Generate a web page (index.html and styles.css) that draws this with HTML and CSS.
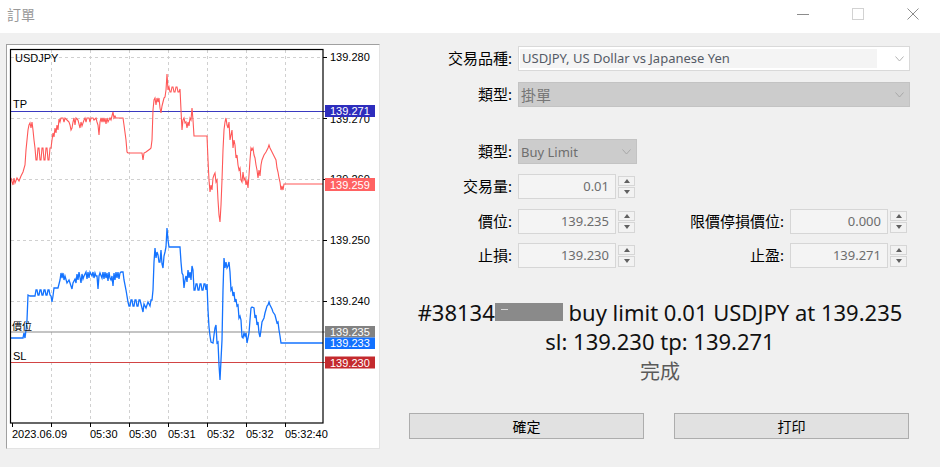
FILE: index.html
```html
<!DOCTYPE html>
<html lang="zh-Hant">
<head>
    <meta charset="UTF-8">
    <meta name="viewport" content="width=device-width, initial-scale=1.0">
    <title>訂單</title>
    <link rel="stylesheet" href="styles.css">
</head>
<body>
    <div class="titlebar">
        <div class="title">訂單</div>
        <div class="controls">
            <svg width="12" height="12"><line x1="0" y1="6.5" x2="12" y2="6.5" stroke="#8c8c8c"/></svg>
            <svg width="12" height="12"><rect x="0.5" y="0.5" width="11" height="11" fill="none" stroke="#d2d2d2"/></svg>
            <svg width="12" height="12"><path d="M0.5 0.5 L11.5 11.5 M11.5 0.5 L0.5 11.5" stroke="#8c8c8c"/></svg>
        </div>
    </div>

    <div class="main">
        <!-- chart -->
        <div class="chart-panel">
            <svg class="chart" width="372" height="403" viewBox="7 45 372 403">
                <g class="grid">
                    <line x1="11" y1="57.5" x2="323" y2="57.5"/>
                    <line x1="11" y1="118.5" x2="323" y2="118.5"/>
                    <line x1="11" y1="179.5" x2="323" y2="179.5"/>
                    <line x1="11" y1="240.5" x2="323" y2="240.5"/>
                    <line x1="11" y1="301.5" x2="323" y2="301.5"/>
                    <line x1="51.5" y1="50" x2="51.5" y2="423"/>
                    <line x1="90.5" y1="50" x2="90.5" y2="423"/>
                    <line x1="129.5" y1="50" x2="129.5" y2="423"/>
                    <line x1="168.5" y1="50" x2="168.5" y2="423"/>
                    <line x1="207.5" y1="50" x2="207.5" y2="423"/>
                    <line x1="246.5" y1="50" x2="246.5" y2="423"/>
                    <line x1="285.5" y1="50" x2="285.5" y2="423"/>
                </g>

                <g class="ticks">
                    <line x1="323" y1="57.5" x2="327" y2="57.5"/>
                    <line x1="323" y1="118.5" x2="327" y2="118.5"/>
                    <line x1="323" y1="179.5" x2="327" y2="179.5"/>
                    <line x1="323" y1="240.5" x2="327" y2="240.5"/>
                    <line x1="323" y1="301.5" x2="327" y2="301.5"/>
                    <line x1="12.5" y1="423" x2="12.5" y2="427"/>
                    <line x1="51.5" y1="423" x2="51.5" y2="427"/>
                    <line x1="90.5" y1="423" x2="90.5" y2="427"/>
                    <line x1="129.5" y1="423" x2="129.5" y2="427"/>
                    <line x1="168.5" y1="423" x2="168.5" y2="427"/>
                    <line x1="207.5" y1="423" x2="207.5" y2="427"/>
                    <line x1="246.5" y1="423" x2="246.5" y2="427"/>
                    <line x1="285.5" y1="423" x2="285.5" y2="427"/>
                </g>

                <g class="axis-text">
                    <text x="330" y="61">139.280</text>
                    <text x="330" y="123">139.270</text>
                    <text x="330" y="183">139.260</text>
                    <text x="330" y="244">139.250</text>
                    <text x="330" y="305">139.240</text>
                    <text x="12" y="438">2023.06.09</text>
                    <text x="90" y="438">05:30</text>
                    <text x="129" y="438">05:30</text>
                    <text x="168" y="438">05:31</text>
                    <text x="207" y="438">05:32</text>
                    <text x="246" y="438">05:32</text>
                    <text x="285" y="438">05:32:40</text>
                </g>

                <line class="lvl-tp" x1="11" y1="111.5" x2="325" y2="111.5"/>
                <line class="lvl-open" x1="11" y1="332" x2="325" y2="332"/>
                <line class="lvl-sl" x1="11" y1="362.5" x2="325" y2="362.5"/>

                <!-- ask -->
                <polyline class="ask" points="11,178 13,185 14,178 15,183 17,178 19,181 21,176 23,172 25,165 26,150 28,130 29,125 30,123 31,128 32,122 33,130 34,140 35,148 36,160 37,160 38,148 39,148 40,160 41,160 42,148 43,148 44,160 45,160 46,148 47,148 48,160 49,160 50,148 51,148 52,140 53,133 54,137 55,128 56,133 57,125 58,130 59,119 60,122 61,118 63,118 64,122 65,118 67,120 69,122 70,125 71,130 72,128 73,122 74,118 75,125 76,118 78,120 79,124 80,128 81,122 82,126 84,120 85,118 86,122 87,118 89,118 90,122 91,118 93,118 94,120 96,118 97,122 98,125 99,135 100,122 101,118 102,122 103,118 104,122 105,118 106,124 107,118 108,122 110,118 111,120 112,116 113,112 114,118 115,116 116,118 123,118 124,125 126,140 127,152 128,153 142,153 143,160 144,153 146,152 150,149 151,148 152,140 153,110 154,100 155,98 156,105 157,98 158,102 159,98 160,108 161,113 162,106 163,102 164,98 165,97 166,90 167,74 168,90 169,87 170,92 171,92 172,87 173,87 174,92 175,92 176,87 177,87 178,92 179,92 180,89 181,110 182,130 183,120 184,118 185,123 186,122 187,128 188,122 189,126 190,118 191,120 192,108 193,120 194,136 207,136 208,160 209,180 210,192 211,185 212,190 213,178 214,175 215,173 216,182 217,180 218,200 219,215 220,222 221,205 222,180 223,150 224,130 225,122 226,118 227,125 228,128 229,122 230,140 231,135 232,130 233,148 234,140 235,145 236,158 237,155 238,165 239,170 240,168 241,180 242,182 243,172 244,180 245,178 246,185 247,180 248,188 249,175 250,160 251,148 252,150 253,148 254,155 255,158 256,165 257,170 258,178 259,170 260,176 261,165 262,160 264,155 266,152 268,148 269,145 270,148 272,152 274,156 276,160 277,168 278,172 279,178 280,182 281,190 282,186 283,190 284,184 323,184"/>
                <!-- bid -->
                <polyline class="bid" points="11,338 23,338 24,333 25,338 26,330 27,320 28,295 30,296 35,296 36,290 37,290 38,295 39,295 40,290 41,290 42,295 43,295 44,290 45,290 46,295 47,295 48,290 49,290 50,295 51,296 52,302 53,296 54,288 58,288 60,280 61,273 62,278 63,273 64,280 65,276 67,283 69,280 71,286 72,289 73,283 75,279 76,283 77,274 78,280 79,272 81,283 82,274 83,279 84,276 86,272 87,279 88,272 89,278 90,272 92,276 93,272 94,278 95,273 96,276 97,276 98,289 99,276 100,273 102,278 103,272 104,279 105,272 106,278 107,273 108,281 109,272 110,278 111,280 112,276 113,286 114,273 115,280 116,272 117,278 118,272 119,279 120,273 121,272 123,272 124,280 126,290 128,302 129,306 130,306 131,300 132,300 133,306 134,306 135,300 136,300 137,306 138,306 139,300 140,300 142,308 143,312 144,304 146,308 148,302 150,306 151,300 152,300 153,290 154,262 155,248 156,258 157,252 158,255 159,262 160,262 161,250 162,264 163,268 164,256 165,252 166,247 167,228 168,240 169,247 180,247 181,262 182,273 183,275 184,288 185,280 186,276 187,282 188,270 189,278 190,272 191,280 192,266 193,270 194,290 195,290 196,284 197,284 198,290 199,290 200,284 201,284 202,290 203,290 204,284 205,284 206,290 207,284 208,310 209,327 210,336 211,342 213,343 214,335 215,328 216,325 217,343 218,342 219,365 220,380 221,360 222,340 223,290 224,258 225,268 226,262 227,268 228,266 229,262 230,272 231,290 232,288 233,296 234,292 235,302 236,299 237,306 238,305 239,318 240,316 241,320 242,337 243,338 244,333 245,336 246,333 247,343 248,338 249,333 250,320 251,308 252,307 254,308 255,318 256,315 257,325 258,322 259,333 260,337 261,330 262,322 264,318 265,313 267,306 268,305 269,302 270,305 272,309 273,312 275,315 276,319 277,323 278,322 279,330 280,336 281,343 282,343 323,343"/>

                <rect class="frame" x="10.5" y="49.5" width="312.5" height="373.5"/>

                <g class="chart-labels">
                    <text x="15" y="62">USDJPY</text>
                    <text x="13" y="108">TP</text>
                    <text x="12" y="330" class="cjk">價位</text>
                    <text x="13" y="360">SL</text>
                </g>

                <g class="tags">
                    <rect x="325" y="105" width="50" height="12" fill="#2d2dbd"/>
                    <text x="330" y="115">139.271</text>
                    <rect x="325" y="178" width="50" height="13" fill="#ff6262"/>
                    <text x="330" y="188.5">139.259</text>
                    <rect x="325" y="326" width="50" height="11.5" fill="#828282"/>
                    <text x="330" y="335.5">139.235</text>
                    <rect x="325" y="337.5" width="50" height="11.5" fill="#1271ff"/>
                    <text x="330" y="347">139.233</text>
                    <rect x="325" y="356.5" width="50" height="12" fill="#c42a2e"/>
                    <text x="330" y="366.5">139.230</text>
                </g>
            </svg>
        </div>

        <!-- order form -->
        <div class="form">
            <div class="row r1">
                <div class="lbl">交易品種:</div>
                <div class="select select-white wide">
                    <span class="select-text">USDJPY, US Dollar vs Japanese Yen</span>
                    <svg class="chev" width="9" height="6"><polyline points="0.5,0.5 4.5,5 8.5,0.5" fill="none" stroke="#b4b4b4"/></svg>
                </div>
            </div>
            <div class="row r2">
                <div class="lbl">類型:</div>
                <div class="select select-grey wide">
                    <span class="select-text cjk-val">掛單</span>
                    <svg class="chev" width="9" height="6"><polyline points="0.5,0.5 4.5,5 8.5,0.5" fill="none" stroke="#a8a8a8"/></svg>
                </div>
            </div>
            <div class="row r3">
                <div class="lbl">類型:</div>
                <div class="select select-grey narrow">
                    <span class="select-text">Buy Limit</span>
                    <svg class="chev" width="9" height="6"><polyline points="0.5,0.5 4.5,5 8.5,0.5" fill="none" stroke="#a8a8a8"/></svg>
                </div>
            </div>
            <div class="row r4">
                <div class="lbl">交易量:</div>
                <div class="num">0.01</div>
                <div class="spin"><span class="up"></span><span class="down"></span></div>
            </div>
            <div class="row r5">
                <div class="lbl">價位:</div>
                <div class="num">139.235</div>
                <div class="spin"><span class="up"></span><span class="down"></span></div>
                <div class="lbl lbl-right">限價停損價位:</div>
                <div class="num">0.000</div>
                <div class="spin"><span class="up"></span><span class="down"></span></div>
            </div>
            <div class="row r6">
                <div class="lbl">止損:</div>
                <div class="num">139.230</div>
                <div class="spin"><span class="up"></span><span class="down"></span></div>
                <div class="lbl lbl-right">止盈:</div>
                <div class="num">139.271</div>
                <div class="spin"><span class="up"></span><span class="down"></span></div>
            </div>

            <div class="message">
                <div>#38134<span class="redacted"></span> buy limit 0.01 USDJPY at 139.235</div>
                <div>sl: 139.230 tp: 139.271</div>
                <div class="done">完成</div>
            </div>

            <div class="buttons">
                <div class="btn">確定</div>
                <div class="btn">打印</div>
            </div>
        </div>
    </div>
</body>
</html>
```

FILE: styles.css
```css
* {
    margin: 0;
    padding: 0;
    box-sizing: border-box;
}

body {
    font-family: "Noto Sans", "Noto Sans CJK TC", sans-serif;
    background: #f0f0f0;
    width: 940px;
    height: 467px;
    overflow: hidden;
    color: #000;
}

/* title bar */
.titlebar {
    height: 33px;
    background: #fff;
    display: flex;
    align-items: center;
    justify-content: space-between;
    padding: 0 21px 5px 7px;
}

.title {
    font-family: "Noto Sans CJK TC", sans-serif;
    font-size: 14px;
    color: #999;
}

.controls {
    display: flex;
    gap: 43px;
}

.controls svg {
    display: block;
}

.main {
    display: flex;
    align-items: flex-start;
}

/* chart */
.chart-panel {
    margin: 11px 0 0 6px;
    width: 374px;
    height: 405px;
    background: #fff;
    border: 1px solid;
    border-color: #a0a0a0 #e3e3e3 #e3e3e3 #a0a0a0;
}

.chart {
    display: block;
    font-family: "Liberation Sans", Arial, sans-serif;
    font-size: 11px;
}

.grid line {
    stroke: #d0d0d0;
    stroke-dasharray: 3 3;
}

.ticks line {
    stroke: #000;
}

.axis-text text,
.chart-labels text {
    fill: #000;
}

.chart-labels .cjk {
    font-family: "Noto Sans CJK TC", sans-serif;
    font-size: 10px;
}

.frame {
    fill: none;
    stroke: #000;
    stroke-width: 1.2;
}

.lvl-tp {
    stroke: #3a3ac0;
    stroke-width: 1.2;
}

.lvl-open {
    stroke: #8a8a8a;
    stroke-width: 1.2;
}

.lvl-sl {
    stroke: #d24444;
    stroke-width: 1.2;
}

.ask {
    fill: none;
    stroke: #ff5757;
    stroke-width: 1.1;
}

.bid {
    fill: none;
    stroke: #1473ff;
    stroke-width: 1.3;
}

.tags text {
    fill: #fff;
}

/* form */
.form {
    flex: 1;
    display: flex;
    flex-direction: column;
}

.row {
    display: flex;
    align-items: center;
    height: 25px;
}

.r1 { margin-top: 13px; }
.r2 { margin-top: 11px; }
.r3 { margin-top: 32px; }
.r4 { margin-top: 10px; }
.r5 { margin-top: 10px; }
.r6 { margin-top: 9px; }

.lbl {
    width: 132px;
    margin-right: 6px;
    text-align: right;
    font-size: 15px;
    line-height: 25px;
    white-space: nowrap;
}

.lbl-right {
    width: 149px;
}

.select {
    height: 25px;
    display: flex;
    align-items: center;
    justify-content: space-between;
    border: 1px solid #d9d9d9;
    padding-right: 5px;
}

.wide {
    width: 392px;
}

.narrow {
    width: 119px;
}

.select-white {
    background: #fff;
}

.select-white .select-text {
    background: #f4f4f4;
    align-self: stretch;
    flex: 1;
    margin: 2px 18px 2px 1px;
    line-height: 19px;
}

.select-grey {
    background: #cccccc;
    border-color: #c3c3c3;
}

.select-text {
    padding-left: 2px;
    font-size: 13px;
    color: #555b66;
    white-space: nowrap;
}

.select-grey .select-text {
    color: #6e6e6e;
}

.cjk-val {
    font-size: 15px;
    color: #777 !important;
}

.chev {
    display: block;
    flex-shrink: 0;
}

.num {
    width: 98px;
    height: 25px;
    background: #f4f4f4;
    border: 1px solid #d6d6d6;
    text-align: right;
    padding-right: 6px;
    font-size: 13px;
    line-height: 23px;
    color: #6d6d6d;
}

.spin {
    width: 17px;
    height: 22px;
    margin-left: 2px;
    display: flex;
    flex-direction: column;
    gap: 1px;
}

.spin span {
    flex: 1;
    border: 1px solid #d6d6d6;
    background: #f2f2f2;
    display: flex;
    align-items: center;
    justify-content: center;
}

.spin span::before {
    content: "";
    border-left: 3.5px solid transparent;
    border-right: 3.5px solid transparent;
}

.spin .up::before {
    border-bottom: 4px solid #606060;
}

.spin .down::before {
    border-top: 4px solid #606060;
}

/* result text */
.message {
    margin-top: 30px;
    text-align: center;
    font-size: 22px;
    line-height: 29px;
    color: #111;
}

.redacted {
    display: inline-block;
    position: relative;
    width: 68px;
    height: 18px;
    background: #8a8a8a;
}

.redacted::after {
    content: "";
    position: absolute;
    left: 6px;
    top: 6px;
    width: 7px;
    height: 1px;
    background: #d8d8d8;
}

.done {
    font-family: "Noto Sans CJK TC", sans-serif;
    font-size: 20px;
    color: #5a5a5a;
}

.buttons {
    margin-top: 28px;
    padding-left: 29px;
    display: flex;
    gap: 30px;
}

.btn {
    width: 235px;
    height: 26px;
    background: #e1e1e1;
    border: 1px solid #adadad;
    text-align: center;
    font-size: 14px;
    line-height: 24px;
    font-family: "Noto Sans CJK TC", sans-serif;
}
```
